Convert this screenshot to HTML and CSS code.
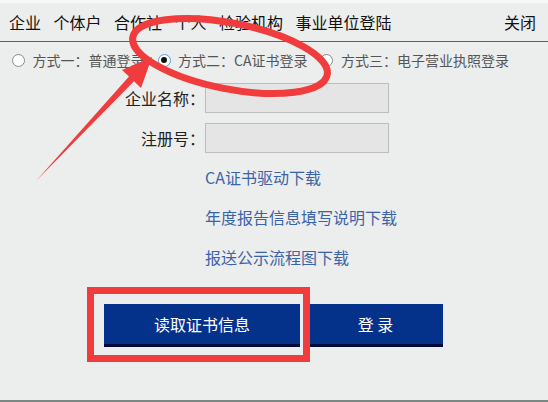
FILE: index.html
```html
<!DOCTYPE html>
<html lang="zh-CN">
<head>
<meta charset="utf-8">
<title>登录</title>
<link rel="stylesheet" href="styles.css">
</head>
<body>
<div class="page">
  <header class="topbar">
    <nav class="tabs">
      <span>企业</span>
      <span>个体户</span>
      <span>合作社</span>
      <span>个人</span>
      <span>检验机构</span>
      <span>事业单位登陆</span>
    </nav>
    <span class="close">关闭</span>
  </header>

  <div class="modes">
    <label class="mode"><span class="radio"></span>方式一：普通登录</label>
    <label class="mode"><span class="radio checked"></span>方式二：CA证书登录</label>
    <label class="mode"><span class="radio"></span>方式三：电子营业执照登录</label>
  </div>

  <div class="form">
    <span class="lbl">企业名称：</span><span class="field"></span>
    <span class="lbl">注册号：</span><span class="field"></span>
  </div>

  <div class="links">
    <a>CA证书驱动下载</a>
    <a>年度报告信息填写说明下载</a>
    <a>报送公示流程图下载</a>
  </div>

  <div class="actions">
    <button class="btn btn-read">读取证书信息</button>
    <button class="btn btn-login">登 录</button>
  </div>

  <div class="bottom-line"></div>

  <svg class="marks" width="548" height="402" viewBox="0 0 548 402">
    <ellipse cx="230" cy="56" rx="99" ry="33" transform="rotate(11 230 56)" fill="none" stroke="#f03c3c" stroke-width="7"/>
    <polygon points="36,181 129,76.5 122,70 152,57 141,88 134,81.3" fill="#f03c3c"/>
    <rect x="90.5" y="290.5" width="216" height="68" fill="none" stroke="#f03c3c" stroke-width="7"/>
  </svg>
</div>
</body>
</html>
```

FILE: styles.css
```css
* { box-sizing: border-box; }

html, body {
  margin: 0;
  padding: 0;
  background: #eceded;
}

body {
  font-family: "Noto Sans CJK SC", "Noto Sans", sans-serif;
  color: #111;
}

.page {
  position: relative;
  width: 548px;
  height: 402px;
  overflow: hidden;
  border-top: 3px solid #f6f7f7;
}

.topbar {
  display: flex;
  justify-content: space-between;
  align-items: center;
  height: 39px;
  padding: 0 12px 0 9px;
  border-bottom: 1px solid #5e6262;
  font-size: 16px;
  line-height: 20px;
}

.tabs {
  display: flex;
  gap: 12.5px;
}

.modes {
  display: flex;
  align-items: center;
  height: 36px;
  padding-left: 12px;
  gap: 13px;
  font-size: 14px;
  line-height: 18px;
  color: #555;
}

.mode {
  display: flex;
  align-items: center;
}

.radio {
  width: 13px;
  height: 13px;
  border: 1px solid #8a8a8a;
  border-radius: 50%;
  background: #fff;
  margin-right: 7.5px;
  position: relative;
}

.radio.checked {
  border-color: #5b9bd5;
}

.radio.checked::after {
  content: "";
  position: absolute;
  left: 2.5px;
  top: 2.5px;
  width: 6px;
  height: 6px;
  border-radius: 50%;
  background: #111;
}

.form {
  display: grid;
  grid-template-columns: 205px 184px;
  row-gap: 10px;
  margin-top: 5px;
  font-size: 16px;
  line-height: 20px;
  color: #222;
}

.lbl {
  display: flex;
  align-items: center;
  justify-content: flex-end;
  height: 30px;
}

.field {
  height: 30px;
  background: #e5e5e5;
  border: 1px solid #bdbdbd;
}

.links {
  display: flex;
  flex-direction: column;
  padding-left: 205px;
  margin-top: 4px;
  font-size: 16px;
}

.links a {
  color: #3b64a6;
  line-height: 40px;
  height: 40px;
}

.actions {
  display: flex;
  gap: 8px;
  padding-left: 104px;
  margin-top: 27px;
}

.btn {
  height: 43px;
  border: 0;
  border-bottom: 3px solid #00093a;
  background: #04328b;
  color: #fff;
  font-family: inherit;
  font-size: 16px;
  padding: 0;
}

.btn-read { width: 196px; }
.btn-login { width: 135px; }

.bottom-line {
  position: absolute;
  left: 0;
  right: 0;
  bottom: 0;
  height: 2px;
  background: #7c8683;
}

.marks {
  position: absolute;
  left: 0;
  top: -3px;
  pointer-events: none;
}
```
